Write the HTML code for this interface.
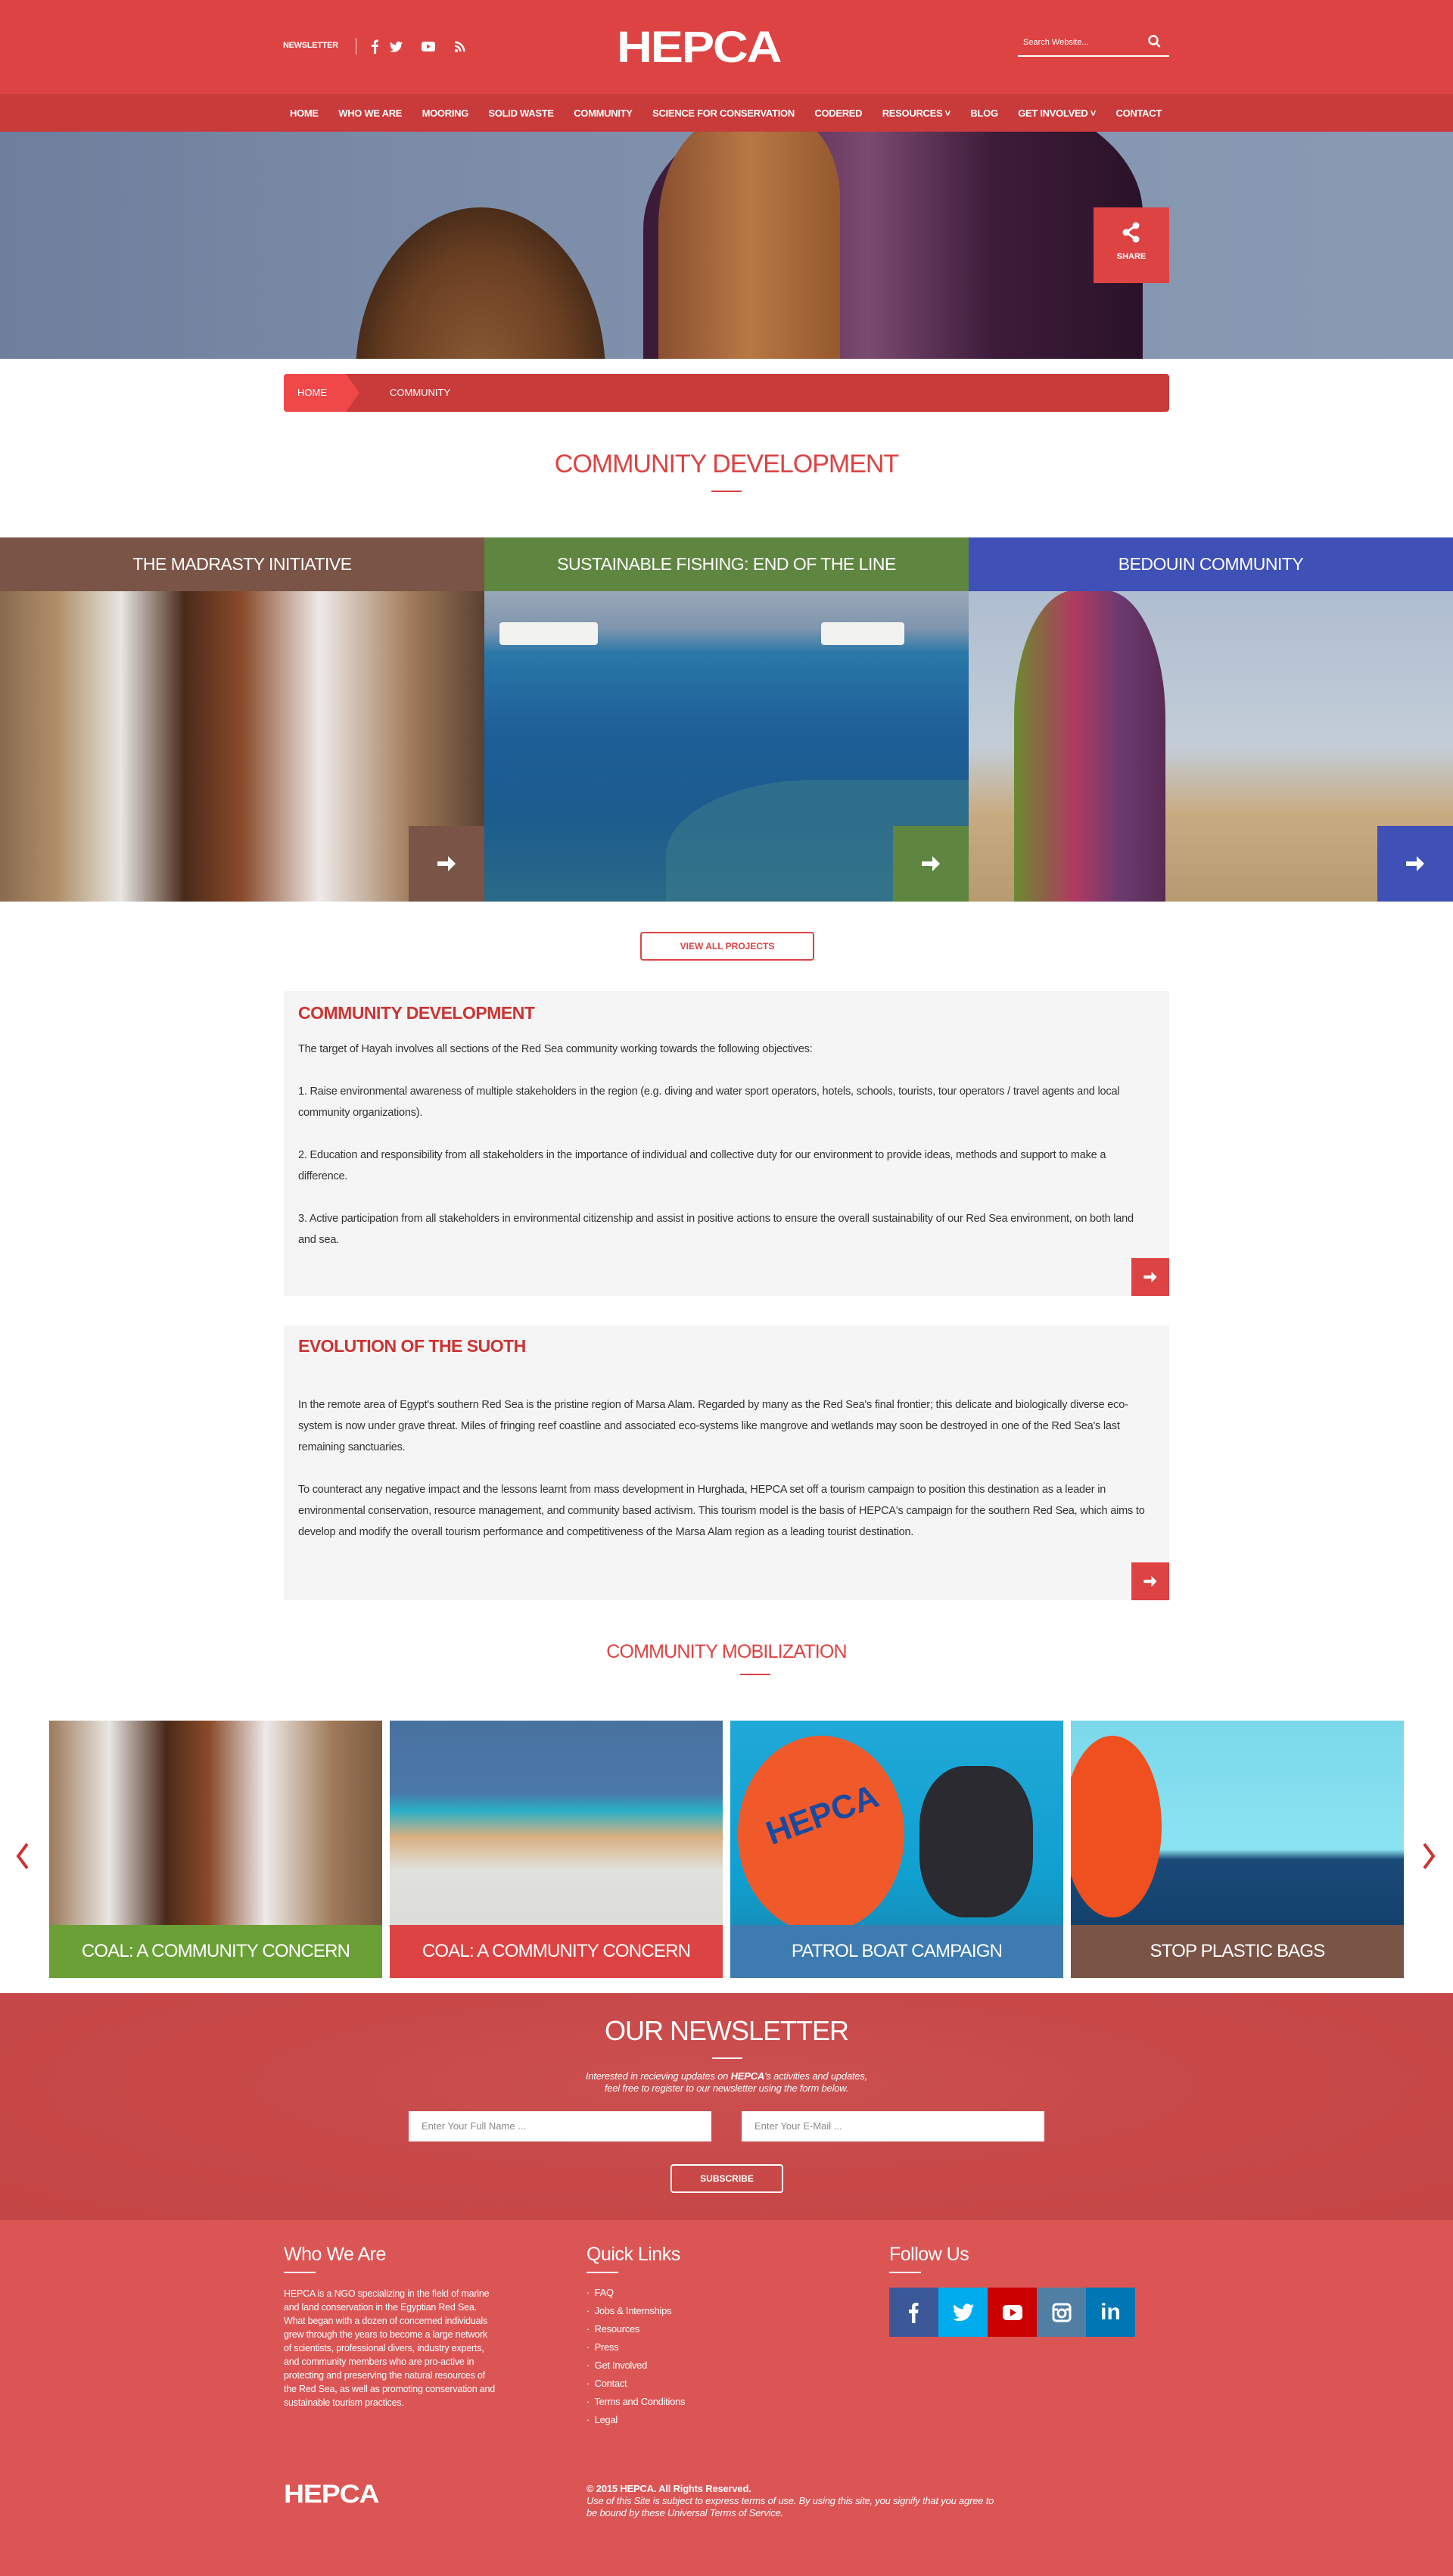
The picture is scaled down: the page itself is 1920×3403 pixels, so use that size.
<!DOCTYPE html>
<html><head><meta charset="utf-8">
<style>
*{margin:0;padding:0;box-sizing:border-box}
body{width:1920px;height:3403px;position:relative;background:#fff;font-family:"Liberation Sans",Arial,sans-serif;overflow:hidden}
.a{position:absolute}
.hdr{left:0;top:0;width:1920px;height:124px;background:#dd4343}
.nav{left:0;top:124px;width:1920px;height:50px;background:#c93a3a}
.navin{left:383px;top:124px;width:1152px;height:50px;display:flex;justify-content:space-between;align-items:center;color:#fff;font-size:13px;font-weight:bold;letter-spacing:-0.3px}
.hero{left:0;top:174px;width:1920px;height:300px;overflow:hidden;background:linear-gradient(90deg,#6d7f9c 0%,#7b8ca8 30%,#8596b0 70%,#8a9ab3 100%)}
.white{color:#fff}
.tile{top:710px;width:640px;height:481px;overflow:hidden}
.band{position:absolute;left:0;top:0;width:100%;height:71px;color:#fff;font-size:23px;text-align:center;line-height:71px;letter-spacing:-0.5px}
.arr{position:absolute;right:0;bottom:0;width:100px;height:100px;display:flex;align-items:center;justify-content:center}
.box{left:375px;width:1170px;background:#f5f5f5}
.box h2{color:#cc3333;font-size:23px;font-weight:bold;margin:0 0 0 19px;letter-spacing:-0.5px}
.box p{font-size:14.5px;color:#333;line-height:28px;margin-left:19px;margin-right:20px;letter-spacing:-0.2px}
.sq{position:absolute;right:0;bottom:0;width:50px;height:50px;background:#dd4343;display:flex;align-items:center;justify-content:center}
.ci{top:2273px;width:440px;height:340px;overflow:hidden}
.ci .lb{position:absolute;left:0;bottom:0;width:100%;height:70px;color:#fff;font-size:24px;text-align:center;line-height:70px;letter-spacing:-0.8px}
.ft h3{color:#fff;font-size:25px;font-weight:normal;letter-spacing:-0.5px}
.uline{width:42px;height:2px;background:#fff;margin-top:8px}
</style></head><body>

<div class="a hdr"></div>
<div class="a white" style="left:374px;top:54px;font-size:11px;font-weight:bold;letter-spacing:-0.3px">NEWSLETTER</div>
<div class="a" style="left:470px;top:50px;width:1px;height:22px;background:#fff;opacity:.8"></div>
<svg class="a" style="left:488px;top:50px" width="150" height="22" viewBox="0 0 150 22" fill="#fff">
<path d="M6 21V12H3V9h3V6.5C6 4 7.5 2.5 9.8 2.5c1 0 2 .1 2 .1v2.6h-1.2c-1.2 0-1.5.7-1.5 1.5V9h2.7l-.4 3H9.1v9z"/>
<path d="M44 6.5c-.6.3-1.3.5-2 .6.7-.4 1.3-1.1 1.5-1.9-.7.4-1.4.7-2.2.8a3.5 3.5 0 0 0-6 3.2c-2.9-.1-5.5-1.5-7.2-3.7-.9 1.6-.4 3.6 1.1 4.6-.6 0-1.1-.2-1.6-.4 0 1.7 1.2 3.2 2.8 3.5-.5.1-1.1.2-1.6.1.5 1.4 1.8 2.4 3.3 2.4A7 7 0 0 1 27 17.2 10 10 0 0 0 42.3 8.3c.7-.5 1.3-1.1 1.7-1.8z"/>
<rect x="69" y="5" width="18" height="13" rx="3"/><path d="M76 8.5v6l5-3z" fill="#dd4343"/>
<circle cx="115" cy="17" r="2"/><path d="M113 9.5a8.5 8.5 0 0 1 8.5 8.5h-2.5a6 6 0 0 0-6-6zM113 4.5A13.5 13.5 0 0 1 126.5 18H124A11 11 0 0 0 113 7z"/>
</svg>
<div class="a white" style="left:815px;top:30px;font-size:58px;font-weight:900;letter-spacing:-2px;line-height:66px;transform:scaleX(1.12);transform-origin:left">HEPCA</div>
<div class="a white" style="left:1352px;top:50px;font-size:11px">Search Website...</div>
<svg class="a" style="left:1516px;top:45px" width="18" height="20" viewBox="0 0 18 20" fill="none" stroke="#fff" stroke-width="2.5"><circle cx="8" cy="8" r="5.5"/><path d="M12 12l4.5 5"/></svg>
<div class="a" style="left:1345px;top:73px;width:200px;height:2px;background:#fff"></div>

<div class="a nav"></div>
<div class="a navin"><span>HOME</span><span>WHO WE ARE</span><span>MOORING</span><span>SOLID WASTE</span><span>COMMUNITY</span><span>SCIENCE FOR CONSERVATION</span><span>CODERED</span><span>RESOURCES ˅</span><span>BLOG</span><span>GET INVOLVED ˅</span><span>CONTACT</span></div>

<div class="a hero">
 <div class="a" style="left:470px;top:100px;width:330px;height:440px;border-radius:50%;background:radial-gradient(ellipse at 50% 50%,#8a5a35 0%,#6a3f22 50%,#3b2415 80%)"></div>
 <div class="a" style="left:850px;top:-60px;width:660px;height:420px;border-radius:45% 40% 0 0;background:linear-gradient(90deg,#3a1a35 0%,#5a2a50 25%,#7a4a70 45%,#3d1c3a 70%,#2a1228 100%)"></div>
 <div class="a" style="left:870px;top:-20px;width:240px;height:360px;border-radius:40% 30% 0 0;background:linear-gradient(90deg,#8a5030,#b77845 50%,#94592e)"></div>
</div>
<div class="a" style="left:1445px;top:274px;width:100px;height:100px;background:#dd4343"></div>
<svg class="a" style="left:1482px;top:293px" width="26" height="28" viewBox="0 0 26 28" fill="#fff"><circle cx="19" cy="5" r="4.5"/><circle cx="6" cy="14" r="4.5"/><circle cx="19" cy="23" r="4.5"/><path d="M6 14L19 5M6 14l13 9" stroke="#fff" stroke-width="3"/></svg>
<div class="a white" style="left:1445px;top:333px;width:100px;text-align:center;font-size:11px;font-weight:bold">SHARE</div>

<div class="a" style="left:375px;top:494px;width:1170px;height:50px;background:#c93a3a;border-radius:4px"></div>
<div class="a" style="left:375px;top:494px;width:100px;height:50px;background:#f04848;border-radius:4px 0 0 4px;clip-path:polygon(0 0,82% 0,100% 50%,82% 100%,0 100%)"></div>
<div class="a white" style="left:393px;top:511px;font-size:13px">HOME</div>
<div class="a white" style="left:515px;top:511px;font-size:13px">COMMUNITY</div>

<div class="a" style="left:0;top:594px;width:1920px;text-align:center;color:#dd4343;font-size:34px;letter-spacing:-1px">COMMUNITY DEVELOPMENT</div>
<div class="a" style="left:940px;top:648px;width:40px;height:2px;background:#dd4343"></div>

<div class="a tile" style="left:0"><div class="a" style="left:0;top:71px;width:640px;height:410px;background:linear-gradient(90deg,#8a6a50 0%,#b0906a 12%,#e8e6e2 25%,#4a2a1a 38%,#8a4a2a 50%,#eeeae8 66%,#a07a5a 85%,#5a4030 100%)"></div><div class="band" style="background:#7a5446">THE MADRASTY INITIATIVE</div><div class="arr" style="background:#7a5446"><svg width="28" height="28" viewBox="0 0 28 28" fill="#fff"><path d="M2 11h14V4l10 10-10 10v-7H2z"/></svg></div></div>
<div class="a tile" style="left:640px"><div class="a" style="left:0;top:71px;width:640px;height:410px;background:linear-gradient(180deg,#9aa8b8 0%,#7f95ae 12%,#2a78a8 20%,#1e5f98 45%,#1b5b8e 70%,#2a6a88 100%)"></div><div class="a" style="left:20px;top:112px;width:130px;height:30px;background:#f2f2f0;border-radius:4px"></div><div class="a" style="left:445px;top:112px;width:110px;height:30px;background:#f2f2f0;border-radius:4px"></div><div class="a" style="left:240px;top:320px;width:400px;height:200px;border-radius:50% 0 0 0;background:#3b7a8a;opacity:.6"></div><div class="band" style="background:#5f8641">SUSTAINABLE FISHING: END OF THE LINE</div><div class="arr" style="background:#5f8641"><svg width="28" height="28" viewBox="0 0 28 28" fill="#fff"><path d="M2 11h14V4l10 10-10 10v-7H2z"/></svg></div></div>
<div class="a tile" style="left:1280px"><div class="a" style="left:0;top:71px;width:640px;height:410px;background:linear-gradient(180deg,#aebdd0 0%,#c3cdd8 50%,#c8ab80 72%,#b89a70 100%)"></div><div class="a" style="left:60px;top:70px;width:200px;height:420px;border-radius:40% 40% 0 0;background:linear-gradient(90deg,#6b8a30,#b03a60 40%,#6a3a70 70%,#5a2a55)"></div><div class="band" style="background:#3f50b6">BEDOUIN COMMUNITY</div><div class="arr" style="background:#3f50b6"><svg width="28" height="28" viewBox="0 0 28 28" fill="#fff"><path d="M2 11h14V4l10 10-10 10v-7H2z"/></svg></div></div>

<div class="a" style="left:846px;top:1231px;width:230px;height:38px;border:2px solid #dd4343;border-radius:4px;color:#dd4343;font-size:12px;font-weight:bold;text-align:center;line-height:34px">VIEW ALL PROJECTS</div>

<div class="a box" style="top:1309px;height:403px;padding-top:16px">
<h2>COMMUNITY DEVELOPMENT</h2>
<p style="margin-top:20px">The target of Hayah involves all sections of the Red Sea community working towards the following objectives:<br><br>1. Raise environmental awareness of multiple stakeholders in the region (e.g. diving and water sport operators, hotels, schools, tourists, tour operators / travel agents and local community organizations).<br><br>2. Education and responsibility from all stakeholders in the importance of individual and collective duty for our environment to provide ideas, methods and support to make a difference.<br><br>3. Active participation from all stakeholders in environmental citizenship and assist in positive actions to ensure the overall sustainability of our Red Sea environment, on both land and sea.</p>
<div class="sq"><svg width="20" height="20" viewBox="0 0 28 28" fill="#fff"><path d="M2 11h14V4l10 10-10 10v-7H2z"/></svg></div>
</div>

<div class="a box" style="top:1751px;height:363px;padding-top:14px">
<h2>EVOLUTION OF THE SUOTH</h2>
<p style="margin-top:50px">In the remote area of Egypt's southern Red Sea is the pristine region of Marsa Alam. Regarded by many as the Red Sea's final frontier; this delicate and biologically diverse eco-system is now under grave threat. Miles of fringing reef coastline and associated eco-systems like mangrove and wetlands may soon be destroyed in one of the Red Sea's last remaining sanctuaries.<br><br>To counteract any negative impact and the lessons learnt from mass development in Hurghada, HEPCA set off a tourism campaign to position this destination as a leader in environmental conservation, resource management, and community based activism. This tourism model is the basis of HEPCA's campaign for the southern Red Sea, which aims to develop and modify the overall tourism performance and competitiveness of the Marsa Alam region as a leading tourist destination.</p>
<div class="sq"><svg width="20" height="20" viewBox="0 0 28 28" fill="#fff"><path d="M2 11h14V4l10 10-10 10v-7H2z"/></svg></div>
</div>

<div class="a" style="left:0;top:2168px;width:1920px;text-align:center;color:#dd4343;font-size:25px;letter-spacing:-0.8px">COMMUNITY MOBILIZATION</div>
<div class="a" style="left:978px;top:2211px;width:40px;height:2px;background:#dd4343"></div>

<svg class="a" style="left:18px;top:2432px" width="22" height="40" viewBox="0 0 22 40"><path d="M18 4L6 20l12 16" stroke="#cc3333" stroke-width="4" fill="none"/></svg>
<svg class="a" style="left:1878px;top:2432px" width="22" height="40" viewBox="0 0 22 40"><path d="M4 4l12 16L4 36" stroke="#cc3333" stroke-width="4" fill="none"/></svg>

<div class="a ci" style="left:65px"><div class="a" style="inset:0;background:linear-gradient(90deg,#9a7a5a 0%,#eae6e2 18%,#4a2a1a 35%,#8a4a2a 48%,#eeeae8 65%,#a07a5a 85%,#7a5a40 100%)"></div><div class="lb" style="background:#6aa036">COAL: A COMMUNITY CONCERN</div></div>
<div class="a ci" style="left:515px"><div class="a" style="inset:0;background:linear-gradient(180deg,#4a72a0 0%,#4a78a8 28%,#2ab0c8 35%,#d8b080 45%,#e0e0dc 58%,#d8d8d6 100%)"></div><div class="lb" style="background:#dd4343">COAL: A COMMUNITY CONCERN</div></div>
<div class="a ci" style="left:965px"><div class="a" style="inset:0;background:linear-gradient(180deg,#20a8d8,#10a0d0 60%,#1a80a8)"></div><div class="a" style="left:10px;top:20px;width:220px;height:260px;border-radius:50%;background:#f05a2a"></div><div class="a" style="left:45px;top:100px;color:#1a4aa0;font-size:44px;font-weight:bold;transform:rotate(-20deg)">HEPCA</div><div class="a" style="left:250px;top:60px;width:150px;height:200px;border-radius:40%;background:#2a2a30"></div><div class="lb" style="background:#3d7bb0">PATROL BOAT CAMPAIGN</div></div>
<div class="a ci" style="left:1415px"><div class="a" style="inset:0;background:linear-gradient(180deg,#7ad8ea 0%,#8ae4f2 50%,#1a4a78 54%,#0e3a66 100%)"></div><div class="a" style="left:-10px;top:20px;width:130px;height:240px;border-radius:50%;background:#f05020"></div><div class="lb" style="background:#7a5446">STOP PLASTIC BAGS</div></div>

<div class="a" style="left:0;top:2633px;width:1920px;height:300px;background:radial-gradient(ellipse at 50% 40%,#cc5050 0%,#c84848 50%,#c54646 100%)"></div>
<div class="a white" style="left:0;top:2662px;width:1920px;text-align:center;font-size:36px;letter-spacing:-1px">OUR NEWSLETTER</div>
<div class="a" style="left:941px;top:2718px;width:40px;height:2px;background:#fff"></div>
<div class="a white" style="left:0;top:2735px;width:1920px;text-align:center;font-size:13px;font-style:italic;line-height:16px;letter-spacing:-0.2px">Interested in recieving updates on <b>HEPCA</b>'s activities and updates,<br>feel free to register to our newsletter using the form below.</div>
<div class="a" style="left:540px;top:2789px;width:400px;height:40px;background:#fff;color:#888;font-size:13px;padding:12px 17px">Enter Your Full Name ...</div>
<div class="a" style="left:980px;top:2789px;width:400px;height:40px;background:#fff;color:#888;font-size:13px;padding:12px 17px">Enter Your E-Mail ...</div>
<div class="a white" style="left:886px;top:2859px;width:149px;height:38px;border:2px solid #fff;border-radius:4px;text-align:center;line-height:34px;font-size:12px;font-weight:bold">SUBSCRIBE</div>

<div class="a" style="left:0;top:2933px;width:1920px;height:470px;background:#dc5555"></div>
<div class="a ft" style="left:375px;top:2964px"><h3>Who We Are</h3><div class="uline"></div>
<div class="white" style="width:280px;font-size:12.5px;line-height:18px;margin-top:18px;letter-spacing:-0.2px">HEPCA is a NGO specializing in the field of marine and land conservation in the Egyptian Red Sea. What began with a dozen of concerned individuals grew through the years to become a large network of scientists, professional divers, industry experts, and community members who are pro-active in protecting and preserving the natural resources of the Red Sea, as well as promoting conservation and sustainable tourism practices.</div></div>
<div class="a ft" style="left:775px;top:2964px"><h3>Quick Links</h3><div class="uline"></div>
<div class="white" style="font-size:13px;line-height:24px;margin-top:14px;letter-spacing:-0.3px">·&nbsp; FAQ<br>·&nbsp; Jobs &amp; Internships<br>·&nbsp; Resources<br>·&nbsp; Press<br>·&nbsp; Get Involved<br>·&nbsp; Contact<br>·&nbsp; Terms and Conditions<br>·&nbsp; Legal</div></div>
<div class="a ft" style="left:1175px;top:2964px"><h3>Follow Us</h3><div class="uline"></div></div>
<div class="a" style="left:1175px;top:3022px;display:flex">
<div style="width:65px;height:65px;background:#3b5998;display:flex;align-items:center;justify-content:center"><svg width="24" height="28" viewBox="0 0 24 28" fill="#fff"><path d="M9 28V15H5v-5h4V6.5C9 3 11 1 14.5 1c1.5 0 3 .2 3 .2v3.8h-1.8c-1.7 0-2.2 1-2.2 2.2V10h4l-.6 5H13.5v13z"/></svg></div>
<div style="width:65px;height:65px;background:#00acee;display:flex;align-items:center;justify-content:center"><svg width="28" height="24" viewBox="0 0 24 20" fill="#fff"><path d="M24 2.4c-.9.4-1.8.6-2.8.8 1-.6 1.8-1.6 2.2-2.7-1 .6-2 1-3.1 1.2A4.9 4.9 0 0 0 11.9 6.2 14 14 0 0 1 1.7 1a4.9 4.9 0 0 0 1.5 6.6c-.8 0-1.6-.2-2.2-.6 0 2.4 1.7 4.4 4 4.8-.7.2-1.5.2-2.2.1.6 2 2.5 3.4 4.6 3.4A9.9 9.9 0 0 1 0 17.4 14 14 0 0 0 21.5 5c1-.7 1.8-1.6 2.5-2.6z"/></svg></div>
<div style="width:65px;height:65px;background:#c00;display:flex;align-items:center;justify-content:center"><svg width="28" height="22" viewBox="0 0 28 22"><rect x="1" y="1" width="26" height="20" rx="5" fill="#fff"/><path d="M11 6v10l8-5z" fill="#c00"/></svg></div>
<div style="width:65px;height:65px;background:#517fa4;display:flex;align-items:center;justify-content:center"><svg width="26" height="26" viewBox="0 0 26 26" fill="none" stroke="#fff" stroke-width="3"><rect x="2" y="2" width="22" height="22" rx="4"/><circle cx="13" cy="14" r="5"/><path d="M2 9h6M18 9h6"/></svg></div>
<div style="width:65px;height:65px;background:#0077b5;display:flex;align-items:center;justify-content:center;color:#fff;font-size:30px;font-weight:bold">in</div>
</div>

<div class="a white" style="left:375px;top:3276px;font-size:34px;font-weight:900;letter-spacing:-1px;transform:scaleX(1.1);transform-origin:left">HEPCA</div>
<div class="a white" style="left:775px;top:3280px;font-size:13px;line-height:16px;letter-spacing:-0.2px"><b>© 2015 HEPCA. All Rights Reserved.</b><br><i>Use of this Site is subject to express terms of use. By using this site, you signify that you agree to<br>be bound by these Universal Terms of Service.</i></div>
</body></html>
